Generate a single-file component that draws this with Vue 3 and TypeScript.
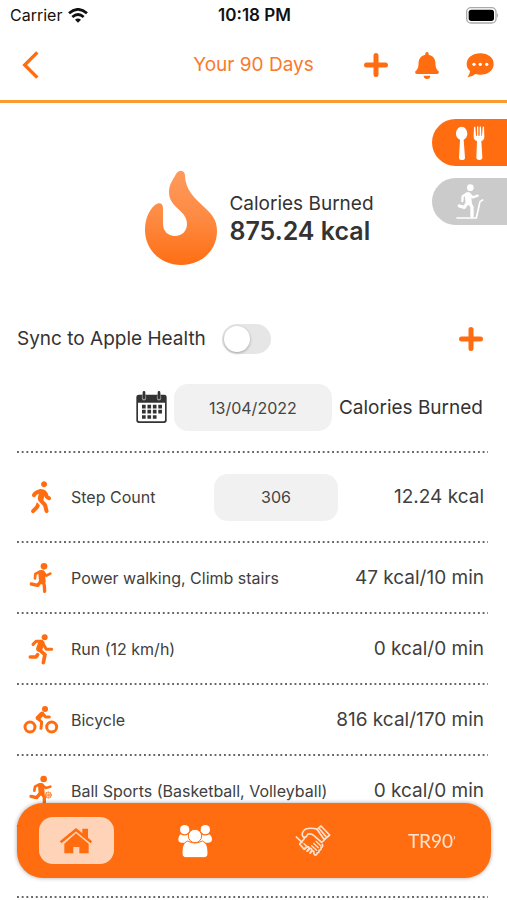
<script setup lang="ts">
import { ref } from 'vue'

interface Activity {
  icon: 'power' | 'run' | 'bike' | 'ball'
  name: string
  burned: string
}

const activities: Activity[] = [
  { icon: 'power', name: 'Power walking, Climb stairs', burned: '47 kcal/10 min' },
  { icon: 'run', name: 'Run (12 km/h)', burned: '0 kcal/0 min' },
  { icon: 'bike', name: 'Bicycle', burned: '816 kcal/170 min' },
  { icon: 'ball', name: 'Ball Sports (Basketball, Volleyball)', burned: '0 kcal/0 min' },
]

const synced = ref(false)
const date = ref('13/04/2022')
const steps = ref('306')
</script>

<template>
  <div class="app">
    <div class="status">
      <span class="carrier">
        Carrier
        <svg width="20" height="15" viewBox="0 0 60 45" fill="none" stroke="#111" stroke-width="8">
          <path d="M3 16Q30-8 57 16" />
          <path d="M13 27Q30 12 47 27" />
          <path d="M21 35Q30 28 39 35L30 44Z" fill="#111" stroke="none" />
        </svg>
      </span>
      <span class="clock">10:18 PM</span>
      <svg class="battery" width="33" height="17" viewBox="0 0 99 51">
        <rect x="2" y="2" width="88" height="46" rx="13" fill="#fff" stroke="#aaa" stroke-width="4" />
        <rect x="8" y="8" width="76" height="34" rx="8" fill="#000" />
        <path d="M93 18q6 7 0 14z" fill="#aaa" />
      </svg>
    </div>

    <header class="header">
      <button class="back" aria-label="Back">
        <svg width="17" height="28" viewBox="0 0 51 84" fill="none" stroke="#ff6d10" stroke-width="10">
          <path d="M46 4 8 42l38 38" />
        </svg>
      </button>
      <h1>Your 90 Days</h1>
      <div class="actions">
        <button aria-label="Add">
          <svg width="24" height="24" viewBox="0 0 24 24" stroke="#ff6d10" stroke-width="5" stroke-linecap="round">
            <path d="M12 2.500v19M2.500 12h19" />
          </svg>
        </button>
        <button aria-label="Notifications">
          <svg width="24" height="27" viewBox="0 0 448 512" fill="#ff6d10">
            <path d="M224 512c35.32 0 63.97-28.65 63.97-64H160.03c0 35.35 28.65 64 63.97 64zm215.390-149.710c-19.320-20.760-55.470-51.990-55.470-154.290 0-77.700-54.480-139.900-127.940-155.160V32c0-17.670-14.320-32-31.980-32s-31.980 14.330-31.980 32v20.840C118.560 68.100 64.080 130.300 64.080 208c0 102.300-36.150 133.530-55.470 154.290-6 6.450-8.660 14.160-8.610 21.710.110 16.400 12.980 32 32.100 32h383.800c19.120 0 32-15.600 32.100-32 .050-7.550-2.610-15.270-8.610-21.710z" />
          </svg>
        </button>
        <button aria-label="Messages">
          <svg width="28" height="25" viewBox="0 0 84 75">
            <path d="M43 1C66 1 83 14 83 33S66 65 43 65q-8 0-15-2Q17 73 4 73q8-9 8-19Q2 46 2 33C2 14 20 1 43 1z" fill="#ff6d10" />
            <g fill="#fff"><circle cx="24" cy="34" r="5" /><circle cx="43" cy="34" r="5" /><circle cx="62" cy="34" r="5" /></g>
          </svg>
        </button>
      </div>
    </header>

    <main>
      <div class="side-tabs">
        <button class="side-tab active" aria-label="Food">
          <svg width="30" height="36" viewBox="144 60 90 108" fill="#fff">
            <path d="M164 65c10 0 17 10 17 21 0 9-5 15-11 18l4 54q0 7-9 7t-9-7l3-54c-7-3-12-9-12-18 0-11 7-21 17-21z" />
            <path d="M201 66q2-3 4 0l2 26h3V65q2-3 4 0v27h4V65q2-3 4 0l1 27h2l2-26q2-3 4 0l1 29q0 10-9 13l3 49q0 8-9 8t-9-8l2-49q-10-3-10-13z" />
          </svg>
        </button>
        <button class="side-tab" aria-label="Exercise">
          <svg width="30" height="38" viewBox="144 232 90 114" fill="none" stroke="#fff" stroke-linecap="round" stroke-linejoin="round">
            <circle cx="190" cy="246" r="10" fill="#fff" stroke="none" />
            <path d="M183 269l2 20" stroke-width="19" />
            <path d="M186 264l11 11 15-5M179 264l-12 8-1 14" stroke-width="7" />
            <path d="M187 290l8 14v27M180 293l-8 12-15-4" stroke-width="10" />
            <path d="M150 337h58l11-49 8-5" stroke-width="5" />
          </svg>
        </button>
      </div>

      <section class="hero">
        <svg width="72" height="96" viewBox="0 0 72 96">
          <defs>
            <linearGradient id="flame" x1="0" y1="0" x2="0" y2="1">
              <stop offset="0" stop-color="#ff9a5c" />
              <stop offset=".5" stop-color="#fd8a42" />
              <stop offset="1" stop-color="#ff6e14" />
            </linearGradient>
          </defs>
          <path fill="url(#flame)" d="M31 4C33 0 39-1 40 5C40 20 50 28 58 36C67 44 72 50 72 61C72 81 56 95 36 95S0 80 0 60C0 49 4 40 10 35C14 32 18 33 18 38V54C18 61 23 66 30 66S42 61 42 54C42 40 24 38 24 22C24 14 28 10 31 4Z" />
        </svg>
        <p class="total">
          <span>Calories Burned</span>
          <strong>875.24 kcal</strong>
        </p>
      </section>

      <div class="sync">
        <label for="sync">Sync to Apple Health</label>
        <input id="sync" v-model="synced" class="switch" type="checkbox" role="switch" />
        <button class="add" aria-label="Add activity">
          <svg width="24" height="24" viewBox="0 0 24 24" stroke="#ff6d10" stroke-width="5" stroke-linecap="round">
            <path d="M12 2.500v19M2.500 12h19" />
          </svg>
        </button>
      </div>

      <div class="day">
        <label for="date" aria-label="Date">
          <svg width="31" height="33" viewBox="0 0 93 99">
            <path d="M8 11h77q7 0 7 7v70q0 8-8 8H9q-8 0-8-8V18q0-7 7-7z" fill="#333" />
            <path d="M6 35h81v51q0 5-5 5H11q-5 0-5-5z" fill="#fff" />
            <g fill="none" stroke-linecap="round">
              <path d="M24 16v6M69 16v6" stroke="#999" stroke-width="13" />
              <path d="M24 4v16M69 4v16" stroke="#333" stroke-width="8" />
            </g>
            <path d="M18 47h60M18 62h60M18 78h45" stroke="#333" stroke-width="11" stroke-dasharray="11 5.300" />
          </svg>
        </label>
        <input id="date" v-model="date" class="field date" type="text" />
        <span>Calories Burned</span>
      </div>

      <ul class="list">
        <li class="row tall">
          <svg class="icon" width="54" height="40" viewBox="-225 -66 864 640" fill="#ff6d10">
            <path d="M208 96c26.500 0 48-21.500 48-48S234.500 0 208 0s-48 21.500-48 48 21.500 48 48 48zm94.500 149.100l-23.300-11.800-9.700-29.400c-14.700-44.600-55.700-75.800-102.200-75.900-36-.1-55.900 10.100-93.300 25.200-21.600 8.700-39.300 25.200-49.700 46.200L17.600 213c-7.800 15.800-1.500 35 14.200 42.900 15.600 7.900 34.600 1.500 42.500-14.300L81 228c3.500-7 9.300-12.500 16.500-15.400l26.800-10.800-15.200 60.700c-5.200 20.800.4 42.900 14.900 58.800l59.900 65.400c7.200 7.900 12.300 17.400 14.900 27.700l18.300 73.300c4.300 17.100 21.700 27.600 38.800 23.300 17.100-4.300 27.600-21.700 23.300-38.800l-22.200-89c-2.600-10.300-7.700-19.900-14.900-27.700l-45.500-49.700 17.200-68.700 5.500 16.500c5.300 16.100 16.700 29.400 31.700 37l23.300 11.800c15.600 7.900 34.600 1.500 42.500-14.300 7.700-15.700 1.400-35.100-14.300-43zM73.600 385.800c-3.200 8.100-8 15.400-14.200 21.500l-50 50.100c-12.500 12.500-12.500 32.800 0 45.300s32.700 12.500 45.200 0l59.400-59.400c6.100-6.100 10.900-13.400 14.200-21.500l13.500-33.800c-55.300-60.300-38.700-41.800-47.400-53.700l-20.700 51.500z" />
          </svg>
          <label for="steps">Step Count</label>
          <input id="steps" v-model="steps" class="field steps" type="text" inputmode="numeric" />
          <span class="burned">12.24 kcal</span>
        </li>
        <li v-for="item in activities" :key="item.name" class="row">
          <svg v-if="item.icon === 'power'" class="icon line" width="54" height="40" viewBox="6 21 162 120">
            <circle cx="87" cy="46" r="10" class="solid" />
            <path d="M80 67l2 23" stroke-width="20" />
            <path d="M84 63l10 11 12-6M74 62l-13 7-1 13" stroke-width="8" />
            <path d="M84 90l4 14 1 17M77 92l-9 11-19-4" stroke-width="10" />
          </svg>
          <svg v-else-if="item.icon === 'run'" class="icon line" width="54" height="40" viewBox="6 234 162 120">
            <circle cx="89" cy="259" r="9" class="solid" />
            <path d="M79 277l-6 16" stroke-width="19" />
            <path d="M80 271l-17 0-9 9M84 278l10 17h16" stroke-width="9" />
            <path d="M72 296l18 15-5 24M46 318h17l5-7" stroke-width="11" />
          </svg>
          <svg v-else-if="item.icon === 'bike'" class="icon line" width="54" height="40" viewBox="6 30 162 120">
            <circle cx="90" cy="57" r="9" class="solid" />
            <circle cx="45" cy="111" r="15" stroke-width="9" />
            <circle cx="110" cy="111" r="15" stroke-width="9" />
            <path d="M81 72l-12 12" stroke-width="14" />
            <path d="M67 84l13 12-2 19M83 71l9 10h11" stroke-width="9" />
          </svg>
          <svg v-else class="icon line" width="54" height="40" viewBox="6 243 162 120">
            <circle cx="86" cy="267" r="10" class="solid" />
            <path d="M78 288l2 20" stroke-width="18" />
            <path d="M82 285l10 9 14-4M73 283l-13 7-2 12" stroke-width="8" />
            <path d="M82 310l6 13v24M75 311l-10 12-17-4" stroke-width="10" />
            <g stroke-width="2"><circle cx="100" cy="315" r="9" /><path d="M91 315h18M100 306v18M94 308q6 7 0 14M106 308q-6 7 0 14" /></g>
          </svg>
          <span>{{ item.name }}</span>
          <span class="burned">{{ item.burned }}</span>
        </li>
        <li class="row" aria-hidden="true"></li>
      </ul>
    </main>

    <nav class="nav">
      <a class="active" href="#" aria-label="Home">
        <svg width="34" height="28" viewBox="177 110 102 84" fill="#ff6d10">
          <path d="M247 115h17v34l-17-15z" />
          <path d="M182 156l46-38 46 38" fill="none" stroke="#ff6d10" stroke-width="8" />
          <path d="M228 129l38 31v29h-28v-19h-18v19h-27v-29z" />
        </svg>
      </a>
      <a href="#" aria-label="Community">
        <svg width="36" height="34" viewBox="530 98 108 102" fill="#fff">
          <circle cx="553" cy="115" r="14" />
          <circle cx="615" cy="115" r="14" />
          <path d="M541 129q12 7 24 0l8 25h-30q-10-2-9-11 1-10 7-14zM627 129q-12 7-24 0l-8 25h30q11-2 10-11-1-10-8-14z" />
          <g stroke="#ff6d10" stroke-width="3">
            <path d="M562 149q22 12 44 0c13 5 17 17 17 37q0 13-13 13h-52q-13 0-13-13c0-20 4-32 17-37z" />
            <circle cx="584" cy="134" r="20" />
          </g>
        </svg>
      </a>
      <a href="#" aria-label="Partners">
        <svg width="36" height="32" viewBox="124 102 108 96" fill="none" stroke="#ffe3d0" stroke-width="5" stroke-linecap="round" stroke-linejoin="round">
          <path d="M128 138l17 16M145 151l-7 8 13 16 6-7" />
          <path d="M190 115l12-10 26 27-16 14zM197 113l21 25" />
          <path d="M190 115q-17-6-34-1c-10 6-13 17-8 23 6 6 12-1 14-7q9-4 18 3l24 21q6-4 8-8" />
          <path d="M145 151q6-4 8-12M153 174l8-7q7 0 4 7l-5 6M162 180l7-8q8 0 4 8l-4 6M170 186l6-7q7 1 4 7l3 6q8 0 7-6 8 0 6-8 8-1 6-8 7-2 4-10" />
          <path d="M180 157l14 13M174 164l15 14M187 151l15 14M151 158l11 10" stroke-width="4" />
        </svg>
      </a>
      <a class="brand" href="#">TR90<sup>’</sup></a>
    </nav>
  </div>
</template>

<style>
body {
  margin: 0;
  background: #fff;
}
</style>

<style scoped>
.app {
  position: relative;
  min-height: 100vh;
  color: #333;
  font-family: Inter, 'Liberation Sans', sans-serif;
  font-size: 19px;
  line-height: 24px;
}
button {
  display: flex;
  padding: 0;
  border: 0;
  background: none;
}
svg {
  display: block;
  flex: none;
}
.status,
.header {
  display: grid;
  grid-template-columns: 1fr auto 1fr;
  align-items: center;
}
.status {
  height: 30px;
  padding: 0 8px 0 10px;
  color: #111;
  font-size: 16px;
}
.carrier {
  display: flex;
  align-items: center;
  gap: 6px;
}
.clock {
  font-size: 17px;
  font-weight: 600;
}
.battery {
  justify-self: end;
}
.header {
  height: 70px;
  padding: 0 13px;
  border-bottom: 3px solid #f89c32;
}
.back {
  margin-left: 9px;
}
h1 {
  margin: 0;
  color: #f97a2c;
  font-size: 19px;
  font-weight: 400;
}
.actions {
  display: flex;
  align-items: center;
  justify-content: flex-end;
  gap: 27px;
}
main {
  position: relative;
  padding: 67px 19px 0 17px;
}
.side-tabs {
  position: absolute;
  top: 16px;
  right: 0;
  display: grid;
  gap: 12px;
}
.side-tab {
  align-items: center;
  width: 75px;
  height: 47px;
  padding-left: 23px;
  border-radius: 24px 0 0 24px;
  background: #cbcbcb;
}
.side-tab.active {
  background: #ff6d10;
}
.hero {
  display: flex;
  align-items: center;
  justify-content: center;
  gap: 12px;
  padding-left: 14px;
}
.total {
  display: grid;
  margin: 0;
}
.total span {
  line-height: 26px;
}
.total strong {
  font-size: 25px;
  font-weight: 600;
  line-height: 28px;
}
.sync {
  display: flex;
  align-items: center;
  height: 32px;
  margin-top: 57px;
  gap: 16px;
}
.switch {
  appearance: none;
  width: 49px;
  height: 30px;
  margin: 0;
  border-radius: 15px;
  background: #e6e6e6;
}
.switch::before {
  content: '';
  display: block;
  width: 26px;
  height: 26px;
  margin: 2px;
  border-radius: 50%;
  background: #fff;
  box-shadow: 0 1px 3px rgba(0, 0, 0, 0.3);
}
.switch:checked {
  background: #ff6d10;
}
.switch:checked::before {
  margin-left: 21px;
}
.add {
  margin-left: auto;
  margin-right: 5px;
}
.day {
  display: flex;
  align-items: center;
  justify-content: flex-end;
  gap: 7px;
  margin-top: 29px;
  padding-right: 5px;
}
.field {
  box-sizing: border-box;
  height: 47px;
  padding: 0;
  border: 0;
  border-radius: 14px;
  background: #f1f1f1;
  color: #444;
  font: inherit;
  font-size: 16px;
  text-align: center;
}
.date {
  width: 158px;
}
.steps {
  width: 124px;
  margin-left: auto;
}
.list {
  margin: 20px 0 0;
  padding: 0;
  list-style: none;
}
.list::before,
.row::after {
  content: '';
  display: block;
  height: 2px;
  background: linear-gradient(90deg, #666 50%, transparent 50%) 0 0 / 1% 2px;
}
.row {
  display: grid;
  grid-template-columns: 54px 1fr auto;
  grid-template-rows: 1fr 2px;
  align-items: center;
  height: 71px;
  color: #404040;
  font-size: 16px;
}
.row.tall {
  grid-template-columns: 54px 1fr 124px 150px;
  height: 90px;
}
.row::after {
  grid-row: 2;
  grid-column: 1 / -1;
}
.burned {
  padding-right: 4px;
  font-size: 19px;
  text-align: right;
}
.line {
  fill: none;
  stroke: #ff6d10;
  stroke-linecap: round;
  stroke-linejoin: round;
}
.solid {
  fill: #ff6d10;
  stroke: none;
}
.nav {
  position: fixed;
  right: 16px;
  bottom: 22px;
  left: 17px;
  display: grid;
  grid-template-columns: repeat(4, 1fr);
  place-items: center;
  height: 75px;
  border-radius: 26px;
  background: #ff6d10;
  box-shadow: 0 0 4px rgba(0, 0, 0, 0.35);
}
.nav a {
  display: grid;
  place-items: center;
  width: 75px;
  height: 47px;
  border-radius: 14px;
  color: #ffe3d0;
  text-decoration: none;
}
.nav .active {
  background: #ffd3b8;
}
.nav .brand {
  display: flex;
  align-items: center;
  justify-content: center;
  font-family: Lato, sans-serif;
  font-size: 19px;
  font-weight: 400;
}
.brand sup {
  align-self: center;
  font-size: 12px;
  line-height: 24px;
}
</style>
